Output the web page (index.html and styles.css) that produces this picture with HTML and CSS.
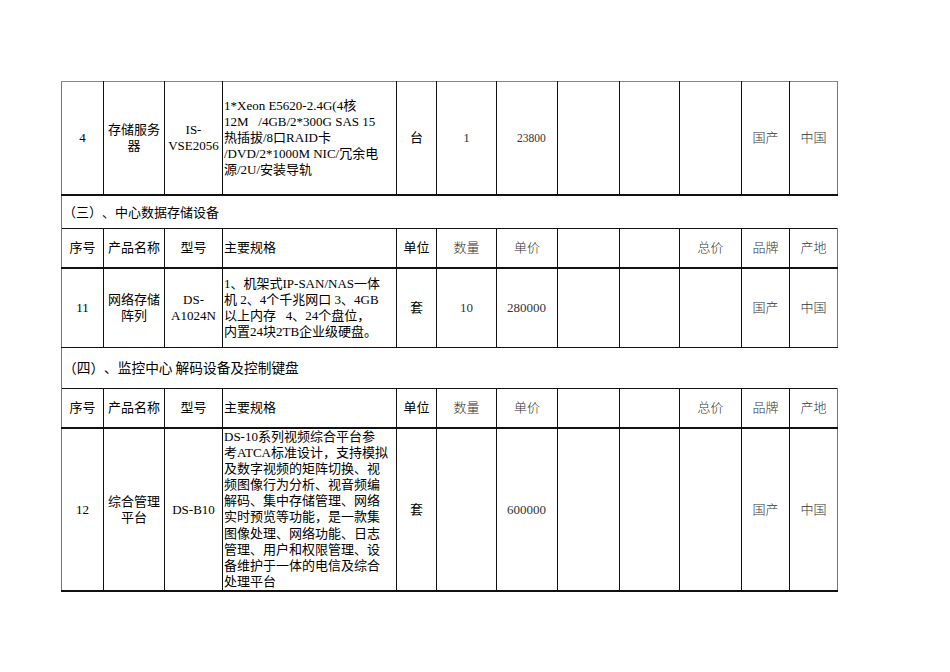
FILE: index.html
```html
<!DOCTYPE html>
<html lang="zh-CN">
<head>
<meta charset="utf-8">
<title>设备清单</title>
<link rel="stylesheet" href="styles.css">
</head>
<body>
<div class="page">
<table class="sheet">
<colgroup>
<col class="c1"><col class="c2"><col class="c3"><col class="c4"><col class="c5"><col class="c6">
<col class="c7"><col class="c8"><col class="c9"><col class="c10"><col class="c11"><col class="c12">
</colgroup>
<tbody>
<tr class="row-a first">
<td class="ctr">4</td>
<td class="ctr lh16">存储服务<br>器</td>
<td class="ctr lh16">IS-<br>VSE2056</td>
<td class="spec lh163">1*Xeon E5620-2.4G(4核<br>12M&nbsp;&nbsp;&nbsp;/4GB/2*300G SAS 15<br>热插拔/8口RAID卡<br>/DVD/2*1000M NIC/冗余电<br>源/2U/安装导轨</td>
<td class="ctr">台</td>
<td class="ctr lite">1</td>
<td class="num lite small">23800</td>
<td></td><td></td><td></td>
<td class="ctr lite">国产</td>
<td class="ctr lite">中国</td>
</tr>
<tr class="sec sec-a"><td colspan="12"><span class="cjk">（三）、中心数据存储设备</span></td></tr>
<tr class="head">
<td class="ctr">序号</td>
<td class="ctr">产品名称</td>
<td class="ctr">型号</td>
<td class="spec">主要规格</td>
<td class="ctr">单位</td>
<td class="ctr lite">数量</td>
<td class="ctr lite">单价</td>
<td></td><td></td>
<td class="ctr lite">总价</td>
<td class="ctr lite">品牌</td>
<td class="ctr lite">产地</td>
</tr>
<tr class="row-b">
<td class="ctr">11</td>
<td class="ctr lh15">网络存储<br>阵列</td>
<td class="ctr lh15">DS-<br>A1024N</td>
<td class="spec lh154">1、机架式IP-SAN/NAS一体<br>机 2、4个千兆网口 3、4GB<br>以上内存&nbsp;&nbsp;&nbsp;4、24个盘位，<br>内置24块2TB企业级硬盘。</td>
<td class="ctr">套</td>
<td class="ctr lite">10</td>
<td class="num lite">280000</td>
<td></td><td></td><td></td>
<td class="ctr lite">国产</td>
<td class="ctr lite">中国</td>
</tr>
<tr class="sec sec-b"><td colspan="12"><span class="cjk">（四）、监控中心 解码设备及控制键盘</span></td></tr>
<tr class="head">
<td class="ctr">序号</td>
<td class="ctr">产品名称</td>
<td class="ctr">型号</td>
<td class="spec">主要规格</td>
<td class="ctr">单位</td>
<td class="ctr lite">数量</td>
<td class="ctr lite">单价</td>
<td></td><td></td>
<td class="ctr lite">总价</td>
<td class="ctr lite">品牌</td>
<td class="ctr lite">产地</td>
</tr>
<tr class="row-c">
<td class="ctr">12</td>
<td class="ctr lh167">综合管理<br>平台</td>
<td class="ctr">DS-B10</td>
<td class="spec top"><div class="clip">DS-10系列视频综合平台参<br>考ATCA标准设计，支持模拟<br>及数字视频的矩阵切换、视<br>频图像行为分析、视音频编<br>解码、集中存储管理、网络<br>实时预览等功能，是一款集<br>图像处理、网络功能、日志<br>管理、用户和权限管理、设<br>备维护于一体的电信及综合<br>处理平台</div></td>
<td class="ctr">套</td>
<td class="ctr lite"></td>
<td class="num lite">600000</td>
<td></td><td></td><td></td>
<td class="ctr lite">国产</td>
<td class="ctr lite">中国</td>
</tr>
</tbody>
</table>
</div>
</body>
</html>
```
FILE: styles.css
```css
html, body {
  margin: 0;
  padding: 0;
  background: #ffffff;
}
.page {
  padding: 81px 0 0 61px;
}
.sheet {
  border-collapse: collapse;
  table-layout: fixed;
  width: 777px;
  font-family: "Liberation Serif", "Noto Sans CJK SC", serif;
  font-size: 13px;
  color: #000;
  text-spacing-trim: space-all;
}
.c1 { width: 42px; }
.c2 { width: 61px; }
.c3 { width: 58px; }
.c4 { width: 174px; }
.c5 { width: 40px; }
.c6 { width: 60px; }
.c7 { width: 61px; }
.c8 { width: 62px; }
.c9 { width: 60px; }
.c10 { width: 62px; }
.c11 { width: 48px; }
.c12 { width: 48px; }

.sheet td {
  border-left: 1px solid #111;
  border-right: 1px solid #111;
  padding: 0 1px;
  vertical-align: middle;
  white-space: nowrap;
  overflow: hidden;
  line-height: 16px;
}
.sheet td:first-child { border-left-color: #777; }
.sheet td:last-child { border-right-color: #777; }

.row-a td { height: 112px; border-bottom: 2px solid #111; }
.first td { border-top: 1px solid #888; }
.head td { height: 38px; border-bottom: 2px solid #111; border-top: 1px solid #111; }
.row-b td { height: 78px; border-bottom: 1px solid #111; }
.row-c td { height: 161px; border-bottom: 2px solid #111; }

.sec td {
  border-right: none;
  text-align: left;
  padding-left: 1px;
  border-left-color: #777;
}
.sec-a td { height: 32px; }
.sec-b td { height: 40px; font-size: 13.7px; }
.cjk { font-family: "Noto Sans CJK SC", sans-serif; }

.ctr { text-align: center; }
.spec { text-align: left; padding-left: 2px; }
.num { text-align: left; padding-left: 10px !important; }
.small { font-size: 11.5px; padding-left: 20px !important; }
.lite { color: #333; font-weight: 300; }

.lh16 { line-height: 16px; }
.lh15 { line-height: 15px; }
.lh167 { line-height: 16.7px; }
.lh163 { line-height: 16.3px; }
.lh154 { line-height: 15.4px; }

.top { vertical-align: top !important; padding-left: 1px !important; }
.clip {
  height: 161px;
  overflow: hidden;
  line-height: 16.1px;
}
```
